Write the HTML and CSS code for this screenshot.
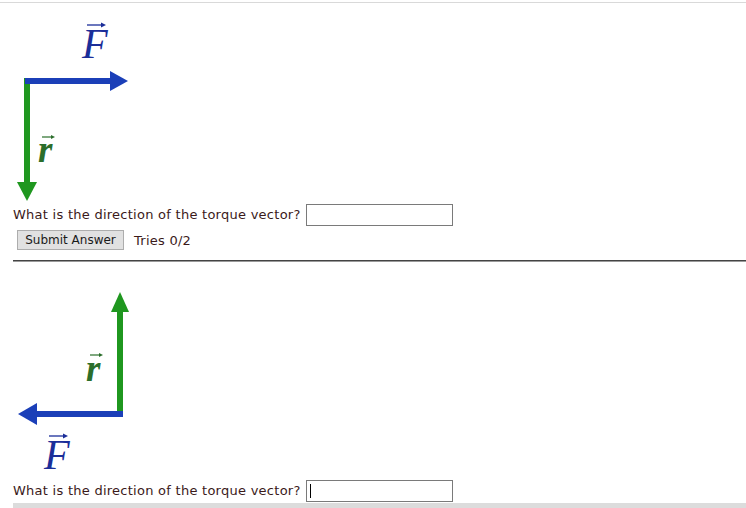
FILE: index.html
```html
<!DOCTYPE html>
<html>
<head>
<meta charset="utf-8">
<link rel="stylesheet" href="styles.css">
</head>
<body>
<div class="topline"></div>
<div class="content">
  <svg class="fig fig1" width="140" height="201" viewBox="13 3 140 201" xmlns="http://www.w3.org/2000/svg">
    <rect x="24" y="78" width="6" height="105" fill="#1f971f"/>
    <polygon points="17,182 37,182 27,201" fill="#1f971f"/>
    <rect x="25" y="78" width="87" height="6" fill="#1b3fb8"/>
    <polygon points="110,71 128,81 110,91" fill="#1b3fb8"/>
    <text x="82" y="58" class="lblF">F</text>
    <line x1="87" y1="25" x2="102" y2="25" stroke="#1b2e99" stroke-width="1.3"/>
    <polygon points="101,22.5 106,25 101,27.5" fill="#1b2e99"/>
    <text x="38" y="162" class="lblR">r</text>
    <line x1="42" y1="137" x2="52" y2="137" stroke="#2b6e2b" stroke-width="1.2"/>
    <polygon points="51,135 55,137 51,139" fill="#2b6e2b"/>
  </svg>
  <div class="qrow">
    <span class="qtext">What is the direction of the torque vector?</span>
    <input class="answer" type="text">
  </div>
  <div class="brow">
    <button class="submit" type="button">Submit Answer</button>
    <span class="tries">Tries 0/2</span>
  </div>
  <hr class="sep">
  <svg class="fig fig2" width="140" height="218" viewBox="13 263 140 218" xmlns="http://www.w3.org/2000/svg">
    <rect x="117" y="312" width="6" height="106" fill="#1f971f"/>
    <polygon points="111,313 129,313 120,293" fill="#1f971f"/>
    <rect x="36" y="412" width="87" height="6" fill="#1b3fb8"/>
    <polygon points="37,404 37,426 18,415" fill="#1b3fb8"/>
    <text x="86" y="382" class="lblR">r</text>
    <line x1="90" y1="356" x2="100" y2="356" stroke="#2b6e2b" stroke-width="1.2"/>
    <polygon points="99,354 103,356 99,358" fill="#2b6e2b"/>
    <text x="44" y="470" class="lblF">F</text>
    <line x1="49" y1="437" x2="64" y2="437" stroke="#1b2e99" stroke-width="1.3"/>
    <polygon points="63,434.5 68,437 63,439.5" fill="#1b2e99"/>
  </svg>
  <div class="qrow">
    <span class="qtext">What is the direction of the torque vector?</span>
    <span class="field">
      <input class="answer" type="text">
      <span class="caret"></span>
    </span>
  </div>
  <div class="footbar"></div>
</div>
</body>
</html>
```

FILE: styles.css
```css
html, body {
  margin: 0;
  padding: 0;
  background: #ffffff;
}
body {
  font-family: "DejaVu Sans", Verdana, sans-serif;
  font-size: 13px;
  color: #3b1a1a;
  overflow: hidden;
}
.topline {
  margin-top: 2px;
  height: 1px;
  background: #d9d9d9;
}
.content {
  padding-left: 13px;
}
.fig {
  display: block;
  margin-left: 0;
}
.lblF {
  font-family: "Liberation Serif", "Times New Roman", serif;
  font-style: italic;
  font-size: 42px;
  fill: #1b2e99;
}
.lblR {
  font-family: "Liberation Serif", "Times New Roman", serif;
  font-style: italic;
  font-weight: bold;
  font-size: 37px;
  fill: #2b6e2b;
}
.qrow {
  display: flex;
  align-items: center;
  height: 22px;
}
.qtext {
  margin-right: 5px;
  line-height: 22px;
  letter-spacing: 0.26px;
}
.field {
  position: relative;
  display: block;
  height: 22px;
}
.answer {
  box-sizing: border-box;
  width: 147px;
  height: 22px;
  margin: 0;
  padding: 0 3px;
  border: 1px solid #7a7a7a;
  background: #fff;
  font-family: "DejaVu Sans", Verdana, sans-serif;
  font-size: 13px;
  display: block;
}
.caret {
  position: absolute;
  left: 4px;
  top: 4px;
  width: 1px;
  height: 14px;
  background: #000;
}
.brow {
  display: flex;
  align-items: center;
  margin-top: 4px;
  height: 20px;
}
.submit {
  box-sizing: border-box;
  margin: 0 0 0 4px;
  width: 107px;
  height: 20px;
  padding: 0;
  background: #e1e1e1;
  border: 1px solid #adadad;
  border-radius: 0;
  font-family: "DejaVu Sans", Verdana, sans-serif;
  font-size: 12px;
  color: #1a1a1a;
}
.tries {
  margin-left: 10px;
  letter-spacing: 0.26px;
}
.sep {
  margin: 10px 0 0 0;
  height: 0;
  border: 0;
  border-top: 1px solid #444444;
  border-bottom: 1px solid #9a9a9a;
}
.footbar {
  margin-top: 1px;
  height: 20px;
  background: #dcdcdc;
}
```
